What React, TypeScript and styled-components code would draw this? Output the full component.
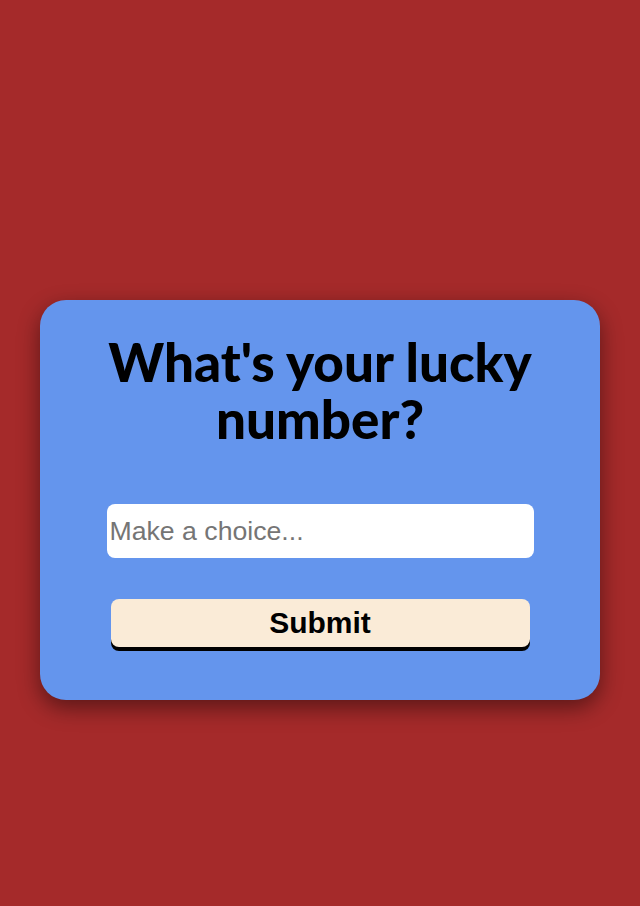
import React from "react";
import styled, { createGlobalStyle } from "styled-components";

const Global = createGlobalStyle`
  html, body { margin: 0; padding: 0; background: #a52a2a; }
  body { font-family: "Liberation Sans", Arial, sans-serif; }
`;

const Page = styled.div`
  min-height: 906px;
  padding: 300px 40px 0;
  box-sizing: border-box;
`;

const Card = styled.form`
  height: 400px;
  background: #6495ed;
  border-radius: 26px;
  box-shadow: 0 8px 22px rgba(0, 0, 0, 0.45);
  display: flex;
  flex-direction: column;
  align-items: center;
  box-sizing: border-box;
  padding-top: 33px;
`;

const Title = styled.h1`
  margin: 0 0 57px;
  width: 460px;
  text-align: center;
  font-family: "Lato", sans-serif;
  font-weight: 900;
  font-size: 53px;
  line-height: 57px;
  color: #000;
`;

const Input = styled.input`
  width: 427px;
  height: 54px;
  box-sizing: border-box;
  border: none;
  border-radius: 8px;
  padding: 0 3px;
  background: #fff;
  font-family: "Liberation Sans", Arial, sans-serif;
  font-size: 26.67px;
  outline: none;
  &::placeholder { color: #757575; }
`;

const Button = styled.button`
  margin-top: 41px;
  width: 419px;
  height: 48px;
  border: none;
  border-radius: 8px;
  background: #faebd7;
  box-shadow: 0 4px 0 #000;
  font-family: "Liberation Sans", Arial, sans-serif;
  font-weight: 700;
  font-size: 30px;
  color: #000;
  cursor: pointer;
`;

export default function App() {
  return (
    <Page>
      <Global />
      <Card onSubmit={(e) => e.preventDefault()}>
        <Title>What's your lucky number?</Title>
        <Input placeholder="Make a choice..." />
        <Button type="submit">Submit</Button>
      </Card>
    </Page>
  );
}
